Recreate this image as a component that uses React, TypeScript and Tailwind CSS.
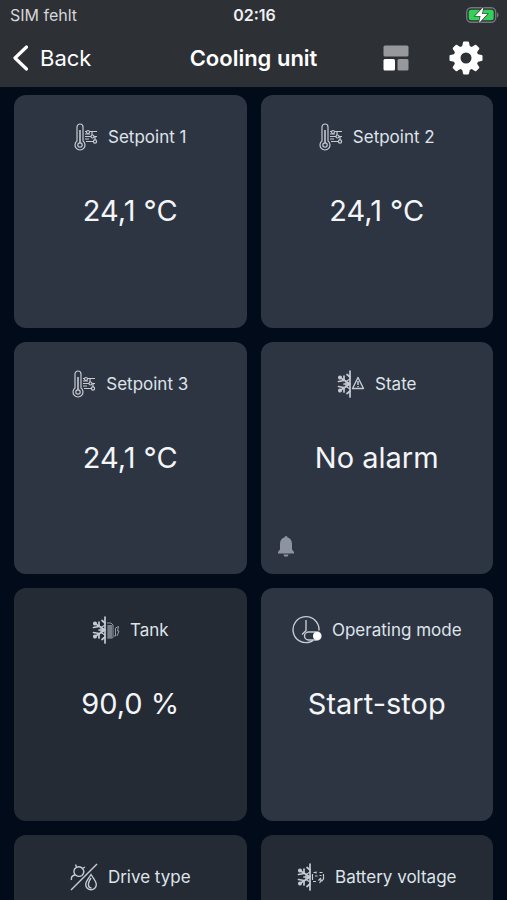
import React from 'react';

const SetpointIcon = () => (
  <svg width="24" height="28" viewBox="0 0 24 28" fill="none" stroke="currentColor" strokeWidth="1.2" aria-hidden="true">
    <path d="M3 18V4a3 3 0 0 1 6 0v14a5 5 0 1 1-6 0Z" />
    <path d="M6 7v13" strokeWidth="1.6" />
    <circle cx="6" cy="22" r="2.2" />
    <path d="M11 8.5h2M16 8.5h7M11 11h5M11 13.500h6M20 13.500h3M11 16h4M12 18.500h7" />
    <circle cx="14" cy="9" r="1.500" />
    <circle cx="18.500" cy="13.500" r="1.500" />
    <circle cx="21" cy="18.500" r="1.600" />
    <path d="M18 9v3M21 14v3" />
  </svg>
);

// Left half of a snowflake, shared by all the cooling icons
const HalfSnowflake = () => (
  <g strokeWidth="1.700" strokeLinecap="round">
    <path d="M13 1v26" />
    <path d="M13 14 3 7.500M13 14 3 20.500M13 14H7" />
    <path d="M13 7 10 4.500M13 21l-3 2.500" />
    <path d="M7 10.500V6M7 10.500l-5.500 1M7 17.500V22M7 17.500l-5.500-1" />
    <path d="M13 9 9 11.500v5l4 2.500" strokeWidth="1.200" />
    <circle cx="3" cy="7.500" r="1.200" />
    <circle cx="3" cy="20.500" r="1.200" />
  </g>
);

const StateIcon = () => (
  <svg width="28" height="28" viewBox="0 0 28 28" fill="none" stroke="currentColor" aria-hidden="true">
    <HalfSnowflake />
    <path d="M21 7.500 15.500 18.500h11Z" strokeWidth="1.400" strokeLinejoin="round" />
    <path d="M21 11v4M21 16v1.200" strokeWidth="1.500" />
  </svg>
);

const TankIcon = () => (
  <svg width="28" height="28" viewBox="0 0 28 28" fill="none" stroke="currentColor" aria-hidden="true">
    <HalfSnowflake />
    <g strokeWidth="1" opacity="0.7">
      <path d="M15 7h4l2 2v12a1 1 0 0 1-1 1h-5" />
      <path d="M15 10h5M15 12h5M15 14h5M15 16h5M15 18h5M15 20h5M17 9v13M19 9v13" />
      <path d="M22 20h1.500V12l3-1.500-1 4.500h1.500l-2 5" />
    </g>
  </svg>
);

const ModeIcon = () => (
  <svg width="30" height="30" viewBox="0 0 30 30" fill="none" stroke="currentColor" strokeWidth="1.400" aria-hidden="true">
    <path d="M18 27A13 13 0 1 1 27 15.500M18 27l3-1.500" />
    <path d="M14 5v10.500l-4 4" />
    <rect x="12.500" y="17" width="16.500" height="8" rx="4" />
    <circle cx="25" cy="21" r="3.300" fill="white" stroke="white" />
  </svg>
);

const DriveIcon = () => (
  <svg width="28" height="28" viewBox="0 0 28 28" fill="none" stroke="currentColor" strokeWidth="1.400" aria-hidden="true">
    <path d="M1 27 27 1" />
    <path d="M4.500 6c2.500-3 6-3 8-.500s1.500 5-.500 7c-2 1.500-5 1-6.500-.500S3.500 8.500 4.500 6Z" />
    <path d="M5 12c-2.500.500-4 2.500-3.500 5M6.500 4 5.500 1.500M12.500 5.500 15 4" />
    <path d="M21 11.500c2.500 4 5.300 6.700 5.300 10a5.300 5.300 0 0 1-10.600 0c0-3.300 2.800-6 5.300-10Z" />
    <path d="M21 15c-2 3-3 5-2.500 7.500.300 1.500 1.500 2.500 3 2.500" />
  </svg>
);

const BatteryIcon = () => (
  <svg width="28" height="28" viewBox="0 0 28 28" fill="none" stroke="currentColor" aria-hidden="true">
    <HalfSnowflake />
    <path d="M15.500 11v6M16 18.500h3M16.500 9.500h3M19 8.500v2M22.500 9.500h3M26.500 11v5l-2 2.500" strokeWidth="1.200" />
    <path d="M18 13h2.500M22.500 12.500h2M24 15l-2 2h2.500l-2 3" strokeWidth="1.200" />
  </svg>
);

const BellIcon = () => (
  <svg width="18" height="22" viewBox="0 0 18 22" fill="currentColor" aria-hidden="true">
    <path d="M9 0a1.600 1.600 0 0 1 1.600 1.600c2.800.800 4.400 3 4.400 6.400v5.500l2 2.500v1.500H1V16l2-2.500V8c0-3.400 1.600-5.600 4.400-6.400A1.600 1.600 0 0 1 9 0Z" />
    <path d="M6.500 18.500h5a2.500 2.300 0 0 1-5 0Z" />
  </svg>
);

const PhoneBatteryIcon = () => (
  <svg width="33" height="18" viewBox="0 0 33 18" fill="none" role="img" aria-label="Charging">
    <rect x="0.700" y="1.700" width="29" height="14.600" rx="4.500" stroke="#73777b" strokeWidth="1.400" />
    <path d="M31 6.500c2 .700 2 4.300 0 5Z" fill="#73777b" />
    <rect x="2.700" y="3.700" width="25" height="10.600" rx="2.500" fill="#34d158" />
    <path d="M17.500 1 9 10h5.500L13 17l8.500-9H16Z" fill="white" stroke="#2d3035" strokeWidth="1.200" paintOrder="stroke" />
  </svg>
);

const LayoutIcon = () => (
  <svg width="26" height="26" viewBox="0 0 26 26" aria-hidden="true">
    <rect x="0.500" y="0.500" width="25" height="11" rx="1.500" fill="#97989b" />
    <rect x="0.500" y="14" width="11.500" height="11.500" rx="1.500" fill="white" />
    <rect x="14.500" y="14" width="11" height="11.500" rx="1.500" fill="#97989b" />
  </svg>
);

const GearIcon = () => (
  <svg width="34" height="34" viewBox="-17 -17 34 34" fill="white" aria-hidden="true">
    <circle r="9" fill="none" stroke="white" strokeWidth="7" />
    {[0, 45, 90, 135, 180, 225, 270, 315].map((angle) => (
      <path key={angle} d="M-4-11-3-15.500Q-2.800-16.500-2-16.500H2Q2.800-16.500 3-15.500L4-11Z" transform={`rotate(${angle})`} />
    ))}
  </svg>
);

const tiles = [
  { title: 'Setpoint 1', value: '24,1 °C', Icon: SetpointIcon, color: 'bg-[#2e3542]' },
  { title: 'Setpoint 2', value: '24,1 °C', Icon: SetpointIcon, color: 'bg-[#2e3542]' },
  { title: 'Setpoint 3', value: '24,1 °C', Icon: SetpointIcon, color: 'bg-[#2e3542]' },
  { title: 'State', value: 'No alarm', Icon: StateIcon, color: 'bg-[#2e3542]', bell: true },
  { title: 'Tank', value: '90,0 %', Icon: TankIcon, color: 'bg-[#242b34]' },
  { title: 'Operating mode', value: 'Start-stop', Icon: ModeIcon, color: 'bg-[#2e3542]' },
  { title: 'Drive type', value: '', Icon: DriveIcon, color: 'bg-[#242b34]' },
  { title: 'Battery voltage', value: '', Icon: BatteryIcon, color: 'bg-[#242b34]' },
];

const Tile = ({ title, value, Icon, color, bell = false }) => (
  <section className={`flex aspect-square flex-col rounded-xl pt-7 ${color}`}>
    <div className="flex h-7 items-center justify-center gap-2.5 text-[#c5cad3]">
      <Icon />
      <h2 className="text-[17px] leading-6 text-[#dfe3ea]">{title}</h2>
    </div>
    <p className="mt-10 h-10 text-center text-[29px] leading-10 text-[#f3f5f8]">{value}</p>
    {bell && (
      <div className="mt-auto px-4 pb-4 text-[#8d949f]">
        <BellIcon />
      </div>
    )}
  </section>
);

const App = () => {
  return (
    <div className="flex h-screen flex-col overflow-hidden bg-[#020b1a] font-['Inter',sans-serif] text-white">
      <header className="shrink-0 bg-[#2d3035]">
        {/* Status bar */}
        <div className="grid h-[29px] grid-cols-3 items-center pr-2 pl-2.5 text-base text-[#d5d7da]">
          <span>SIM fehlt</span>
          <span className="text-center font-semibold text-[#eff0f1]">02:16</span>
          <span className="flex justify-end">
            <PhoneBatteryIcon />
          </span>
        </div>

        {/* Navigation */}
        <nav className="grid h-[58px] grid-cols-[1fr_auto_1fr] items-center px-3">
          <button className="flex items-center gap-3 text-[22px]">
            <svg width="16" height="26" viewBox="0 0 16 26" fill="none" stroke="white" strokeWidth="3.200" strokeLinecap="round" strokeLinejoin="round" aria-hidden="true">
              <path d="M14.500 2 3 13l11.500 11" />
            </svg>
            Back
          </button>
          <h1 className="text-[22px] font-semibold">Cooling unit</h1>
          <div className="flex items-center justify-end gap-10 pr-3">
            <button aria-label="Layout">
              <LayoutIcon />
            </button>
            <button aria-label="Settings">
              <GearIcon />
            </button>
          </div>
        </nav>
      </header>

      {/* Tiles */}
      <main className="grid grid-cols-2 gap-3.5 px-3.5 pt-2">
        {tiles.map((tile) => (
          <Tile key={tile.title} {...tile} />
        ))}
      </main>
    </div>
  );
};

export default App;
